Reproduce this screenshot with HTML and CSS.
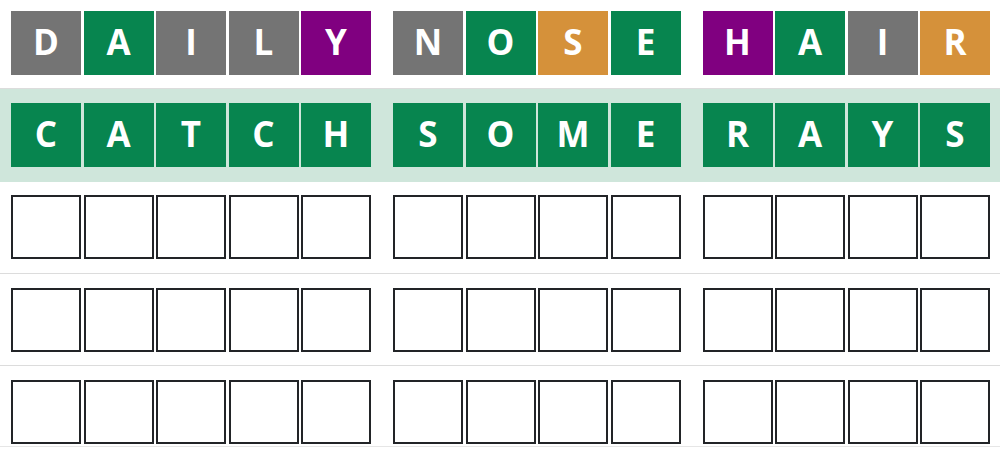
FILE: index.html
```html
<!DOCTYPE html>
<html>
<head>
<meta charset="utf-8">
<link rel="stylesheet" href="styles.css">
</head>
<body>
<div class="board">
  <div class="row row-first">
    <div class="group g5">
      <div class="tile gray">D</div><div class="tile green">A</div><div class="tile gray">I</div><div class="tile gray">L</div><div class="tile purple">Y</div>
    </div>
    <div class="group g4">
      <div class="tile gray">N</div><div class="tile green">O</div><div class="tile orange">S</div><div class="tile green">E</div>
    </div>
    <div class="group g4">
      <div class="tile purple">H</div><div class="tile green">A</div><div class="tile gray">I</div><div class="tile orange">R</div>
    </div>
  </div>
  <div class="row row-active">
    <div class="group g5">
      <div class="tile green">C</div><div class="tile green">A</div><div class="tile green">T</div><div class="tile green">C</div><div class="tile green">H</div>
    </div>
    <div class="group g4">
      <div class="tile green">S</div><div class="tile green">O</div><div class="tile green">M</div><div class="tile green">E</div>
    </div>
    <div class="group g4">
      <div class="tile green">R</div><div class="tile green">A</div><div class="tile green">Y</div><div class="tile green">S</div>
    </div>
  </div>
  <div class="row row-a">
    <div class="group g5">
      <div class="tile empty"></div><div class="tile empty"></div><div class="tile empty"></div><div class="tile empty"></div><div class="tile empty"></div>
    </div>
    <div class="group g4">
      <div class="tile empty"></div><div class="tile empty"></div><div class="tile empty"></div><div class="tile empty"></div>
    </div>
    <div class="group g4">
      <div class="tile empty"></div><div class="tile empty"></div><div class="tile empty"></div><div class="tile empty"></div>
    </div>
  </div>
  <div class="row row-b">
    <div class="group g5">
      <div class="tile empty"></div><div class="tile empty"></div><div class="tile empty"></div><div class="tile empty"></div><div class="tile empty"></div>
    </div>
    <div class="group g4">
      <div class="tile empty"></div><div class="tile empty"></div><div class="tile empty"></div><div class="tile empty"></div>
    </div>
    <div class="group g4">
      <div class="tile empty"></div><div class="tile empty"></div><div class="tile empty"></div><div class="tile empty"></div>
    </div>
  </div>
  <div class="row row-last">
    <div class="group g5">
      <div class="tile empty"></div><div class="tile empty"></div><div class="tile empty"></div><div class="tile empty"></div><div class="tile empty"></div>
    </div>
    <div class="group g4">
      <div class="tile empty"></div><div class="tile empty"></div><div class="tile empty"></div><div class="tile empty"></div>
    </div>
    <div class="group g4">
      <div class="tile empty"></div><div class="tile empty"></div><div class="tile empty"></div><div class="tile empty"></div>
    </div>
  </div>
</div>
</body>
</html>
```
FILE: styles.css
```css
html, body {
  margin: 0;
  padding: 0;
  background: #ffffff;
}
body {
  font-family: "Open Sans", "Noto Sans", "DejaVu Sans", sans-serif;
  width: 1000px;
  height: 463px;
  overflow: hidden;
}
.board {
  display: flex;
  flex-direction: column;
}
.row {
  display: flex;
  gap: 22px;
  padding: 14px 0 13px 11px;
  border-bottom: 1px solid #dcdcdc;
}
.row-first {
  padding-top: 11px;
  padding-bottom: 13px;
}
.row-active {
  background: #cfe6db;
  padding-top: 14px;
  padding-bottom: 15px;
  border-bottom: none;
}
.row-a {
  padding-top: 13px;
  padding-bottom: 14px;
}
.row-last {
  padding-bottom: 2px;
  border-bottom-color: #e6e6e6;
}
.group {
  display: flex;
  gap: 2.5px;
}
.tile {
  width: 70px;
  height: 64px;
  box-sizing: border-box;
  display: flex;
  align-items: center;
  justify-content: center;
  color: #ffffff;
  font-weight: 700;
  font-size: 35px;
  line-height: 1;
  padding-bottom: 3px;
}
.gray { background: #747474; }
.green { background: #07854f; }
.purple { background: #800080; }
.orange { background: #d5913a; }
.empty {
  background: #ffffff;
  border: 2px solid #222427;
}
```
